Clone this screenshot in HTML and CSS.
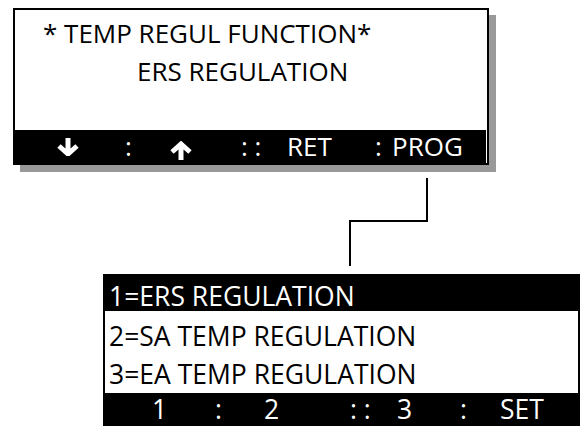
FILE: index.html
```html
<!DOCTYPE html>
<html lang="en">
<head>
  <meta charset="UTF-8" />
  <title>Temp regul function</title>
  <link rel="stylesheet" href="styles.css">
</head>
<body>
  <div class="screen screen-top">
    <div class="screen-text">
      <div class="line">* TEMP REGUL FUNCTION*</div>
      <div class="line indent">ERS REGULATION</div>
    </div>
    <div class="keys keys-top">
      <span class="key"><svg class="arrow" viewBox="0 0 22 18" width="22" height="18"><path d="M11 0 V15 M2 8 L11 16 L20 8" /></svg></span>
      <span class="key">:</span>
      <span class="key"><svg class="arrow up" viewBox="0 0 22 19" width="22" height="19"><path d="M11 19 V3 M2 11 L11 3 L20 11" /></svg></span>
      <span class="key">:&nbsp;:</span>
      <span class="key">RET</span>
      <span class="key">:</span>
      <span class="key">PROG</span>
    </div>
  </div>

  <div class="connector">
    <div class="wire-upper"></div>
    <div class="wire-lower"></div>
  </div>

  <div class="screen screen-menu">
    <div class="row selected">1=ERS REGULATION</div>
    <div class="row">2=SA TEMP REGULATION</div>
    <div class="row">3=EA TEMP REGULATION</div>
    <div class="keys keys-menu">
      <span class="key">1</span>
      <span class="key">:</span>
      <span class="key">2</span>
      <span class="key">:&nbsp;:</span>
      <span class="key">3</span>
      <span class="key">:</span>
      <span class="key">SET</span>
    </div>
  </div>
</body>
</html>
```

FILE: styles.css
```css
body {
  margin: 0;
  background: #ffffff;
  font-family: 'Open Sans', 'DejaVu Sans', sans-serif;
  color: #000000;
  overflow: hidden;
  height: 426px;
}

.screen {
  background: #ffffff;
  border: 2px solid #000000;
  box-sizing: border-box;
}

.screen-top {
  margin: 8px 0 0 13px;
  width: 476px;
  height: 157px;
  display: flex;
  flex-direction: column;
  box-shadow: 7px 7px 0 #999999;
}

.screen-text {
  flex: 1;
  padding: 4px 0 0 28px;
  font-size: 26px;
  line-height: 38px;
  white-space: nowrap;
}

.indent {
  padding-left: 94px;
}

.keys {
  display: grid;
  align-items: center;
  background: #000000;
  color: #ffffff;
  white-space: nowrap;
}

.keys-top {
  height: 33px;
  margin-right: 1px;
  font-size: 26px;
  line-height: 33px;
  grid-template-columns: 68px 45px 71px 46px 88px 17px auto;
  padding-left: 42px;
}

.arrow {
  display: block;
  fill: none;
  stroke: #ffffff;
  stroke-width: 5;
}

.arrow.up {
  margin-top: 8px;
}

.connector {
  margin: 13px 0 0 349px;
}

.wire-upper {
  width: 77px;
  height: 42px;
  border-right: 2px solid #000000;
  border-bottom: 2px solid #000000;
}

.wire-lower {
  width: 0;
  height: 44px;
  border-left: 2px solid #000000;
}

.screen-menu {
  margin: 8px 0 0 103px;
  width: 477px;
  border-bottom: none;
  font-size: 26.5px;
}

.row {
  height: 38px;
  line-height: 38px;
  padding-left: 4px;
  white-space: nowrap;
}

.row.selected {
  background: #000000;
  color: #ffffff;
  height: 35px;
  box-sizing: border-box;
  padding-top: 5px;
  line-height: 30px;
  margin-bottom: 6px;
}

.keys-menu {
  height: 33px;
  line-height: 33px;
  font-size: 26.5px;
  grid-template-columns: 63px 49px 86px 47px 63px 40px auto;
  padding-left: 47px;
}
```
